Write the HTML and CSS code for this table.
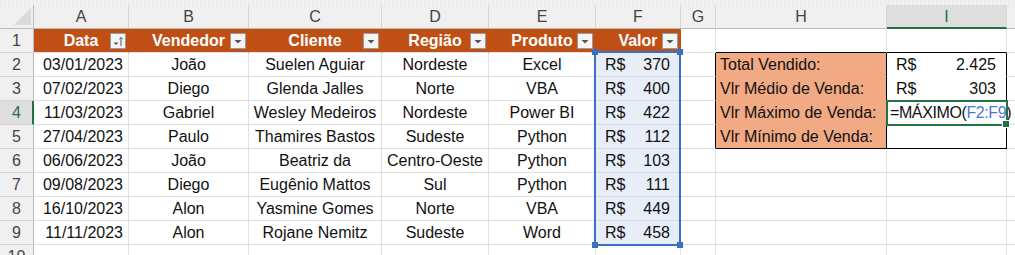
FILE: index.html
```html
<!DOCTYPE html>
<html lang="pt-BR">
<head>
<meta charset="utf-8">
<title>Planilha</title>
<link rel="stylesheet" href="styles.css">
</head>
<body>
<div class="strip"></div>
<div class="wrap">
<div class="sheet">
  <!-- column headers -->
  <div class="ch corner"><span class="tri"></span></div>
  <div class="ch">A</div>
  <div class="ch">B</div>
  <div class="ch">C</div>
  <div class="ch">D</div>
  <div class="ch">E</div>
  <div class="ch">F</div>
  <div class="ch">G</div>
  <div class="ch">H</div>
  <div class="ch ch-active">I</div>
  <div class="ch"></div>

  <!-- row 1 -->
  <div class="rh">1</div>
  <div class="th">Data<span class="fbtn"><svg width="14" height="14" viewBox="0 0 14 14"><path d="M2.5 8.5h5l-2.5 2.5z" fill="#555"/><path d="M10 12V3.5M8.3 5.2L10 3.5l1.7 1.7" stroke="#555" stroke-width="1" fill="none"/></svg></span></div>
  <div class="th">Vendedor<span class="fbtn"><svg width="14" height="14" viewBox="0 0 14 14"><path d="M3.5 6h7L7 9.5z" fill="#555"/></svg></span></div>
  <div class="th">Cliente<span class="fbtn"><svg width="14" height="14" viewBox="0 0 14 14"><path d="M3.5 6h7L7 9.5z" fill="#555"/></svg></span></div>
  <div class="th">Região<span class="fbtn"><svg width="14" height="14" viewBox="0 0 14 14"><path d="M3.5 6h7L7 9.5z" fill="#555"/></svg></span></div>
  <div class="th">Produto<span class="fbtn"><svg width="14" height="14" viewBox="0 0 14 14"><path d="M3.5 6h7L7 9.5z" fill="#555"/></svg></span></div>
  <div class="th">Valor<span class="fbtn"><svg width="14" height="14" viewBox="0 0 14 14"><path d="M3.5 6h7L7 9.5z" fill="#555"/></svg></span></div>
  <div class="c"></div>
  <div class="c box-top"></div>
  <div class="c box-top"></div>
  <div class="c"></div>

  <!-- row 2 -->
  <div class="rh">2</div>
  <div class="c r">03/01/2023</div>
  <div class="c ctr">João</div>
  <div class="c ctr">Suelen Aguiar</div>
  <div class="c ctr">Nordeste</div>
  <div class="c ctr">Excel</div>
  <div class="c acct sel"><span>R$</span><span>370</span></div>
  <div class="c box-left"></div>
  <div class="c lbl">Total Vendido:</div>
  <div class="c acct val"><span>R$</span><span>2.425</span></div>
  <div class="c"></div>

  <!-- row 3 -->
  <div class="rh">3</div>
  <div class="c r">07/02/2023</div>
  <div class="c ctr">Diego</div>
  <div class="c ctr">Glenda Jalles</div>
  <div class="c ctr">Norte</div>
  <div class="c ctr">VBA</div>
  <div class="c acct sel"><span>R$</span><span>400</span></div>
  <div class="c box-left"></div>
  <div class="c lbl">Vlr Médio de Venda:</div>
  <div class="c acct val"><span>R$</span><span>303</span></div>
  <div class="c"></div>

  <!-- row 4 -->
  <div class="rh rh-active">4</div>
  <div class="c r">11/03/2023</div>
  <div class="c ctr">Gabriel</div>
  <div class="c ctr">Wesley Medeiros</div>
  <div class="c ctr">Nordeste</div>
  <div class="c ctr">Power BI</div>
  <div class="c acct sel"><span>R$</span><span>422</span></div>
  <div class="c box-left"></div>
  <div class="c lbl">Vlr Máximo de Venda:</div>
  <div class="c val active">=MÁXIMO(<span class="ref">F2:F9</span>)</div>
  <div class="c"></div>

  <!-- row 5 -->
  <div class="rh">5</div>
  <div class="c r">27/04/2023</div>
  <div class="c ctr">Paulo</div>
  <div class="c ctr">Thamires Bastos</div>
  <div class="c ctr">Sudeste</div>
  <div class="c ctr">Python</div>
  <div class="c acct sel"><span>R$</span><span>112</span></div>
  <div class="c box-left"></div>
  <div class="c lbl box-bottom">Vlr Mínimo de Venda:</div>
  <div class="c val box-bottom"></div>
  <div class="c"></div>

  <!-- row 6 -->
  <div class="rh">6</div>
  <div class="c r">06/06/2023</div>
  <div class="c ctr">João</div>
  <div class="c ctr">Beatriz da</div>
  <div class="c ctr">Centro-Oeste</div>
  <div class="c ctr">Python</div>
  <div class="c acct sel"><span>R$</span><span>103</span></div>
  <div class="c"></div>
  <div class="c"></div>
  <div class="c"></div>
  <div class="c"></div>

  <!-- row 7 -->
  <div class="rh">7</div>
  <div class="c r">09/08/2023</div>
  <div class="c ctr">Diego</div>
  <div class="c ctr">Eugênio Mattos</div>
  <div class="c ctr">Sul</div>
  <div class="c ctr">Python</div>
  <div class="c acct sel"><span>R$</span><span>111</span></div>
  <div class="c"></div>
  <div class="c"></div>
  <div class="c"></div>
  <div class="c"></div>

  <!-- row 8 -->
  <div class="rh">8</div>
  <div class="c r">16/10/2023</div>
  <div class="c ctr">Alon</div>
  <div class="c ctr">Yasmine Gomes</div>
  <div class="c ctr">Norte</div>
  <div class="c ctr">VBA</div>
  <div class="c acct sel"><span>R$</span><span>449</span></div>
  <div class="c"></div>
  <div class="c"></div>
  <div class="c"></div>
  <div class="c"></div>

  <!-- row 9 -->
  <div class="rh">9</div>
  <div class="c r">11/11/2023</div>
  <div class="c ctr">Alon</div>
  <div class="c ctr">Rojane Nemitz</div>
  <div class="c ctr">Sudeste</div>
  <div class="c ctr">Word</div>
  <div class="c acct sel"><span>R$</span><span>458</span></div>
  <div class="c"></div>
  <div class="c"></div>
  <div class="c"></div>
  <div class="c"></div>

  <!-- row 10 -->
  <div class="rh">10</div>
  <div class="c"></div>
  <div class="c"></div>
  <div class="c"></div>
  <div class="c"></div>
  <div class="c"></div>
  <div class="c"></div>
  <div class="c"></div>
  <div class="c"></div>
  <div class="c"></div>
  <div class="c"></div>
</div>

<!-- overlay layer: formula reference range F2:F9 -->
<div class="overlay">
  <div class="range">
    <span class="hdl tl"></span><span class="hdl tr"></span>
    <span class="hdl bl"></span><span class="hdl br"></span>
  </div>
</div>
</div>
</body>
</html>
```

FILE: styles.css
```css
* { box-sizing: border-box; }

html, body {
  margin: 0;
  padding: 0;
  background: #ffffff;
  overflow: hidden;
}

body {
  font-family: "Liberation Sans", Arial, sans-serif;
  font-size: 16px;
  color: #111;
}

.strip {
  height: 5px;
  background: repeating-linear-gradient(90deg, #ececec 0 2px, #f2f2f2 2px 4px);
}

.wrap {
  display: grid;
  width: 1015px;
}

.sheet,
.overlay {
  grid-area: 1 / 1;
  display: grid;
  grid-template-columns: 34px 95px 120px 133px 107px 107px 85px 35px 171px 120px 1fr;
  grid-auto-rows: 24px;
}

.sheet { background: #fff; }

.overlay {
  pointer-events: none;
  z-index: 2;
}

/* column headers */
.ch {
  display: flex;
  align-items: center;
  justify-content: center;
  background: #f0f0f0;
  color: #444;
  border-right: 1px solid #d6d6d6;
  border-bottom: 1px solid #bcbcbc;
  padding-top: 1px;
}

.corner {
  position: relative;
  border-right-color: #bcbcbc;
}

.corner .tri {
  position: absolute;
  right: 2px;
  bottom: 3px;
  width: 0;
  height: 0;
  border-left: 17px solid transparent;
  border-bottom: 17px solid #dadada;
}

.ch-active {
  background: #dedede;
  color: #1e7145;
  border-bottom: 2px solid #217346;
  padding-top: 2px;
}

/* row headers */
.rh {
  display: flex;
  align-items: center;
  justify-content: center;
  background: #f0f0f0;
  color: #444;
  border-right: 1px solid #bcbcbc;
  border-bottom: 1px solid #d6d6d6;
}

.rh-active {
  background: #dedede;
  color: #1e7145;
  border-right: 2px solid #217346;
  padding-left: 1px;
}

/* data cells */
.c {
  display: flex;
  align-items: center;
  border-right: 1px solid #e1e1e1;
  border-bottom: 1px solid #e1e1e1;
  white-space: nowrap;
  padding: 0 5px;
}

.r { justify-content: flex-end; }
.ctr { justify-content: center; padding: 0; }

/* table header row */
.th {
  position: relative;
  display: flex;
  align-items: center;
  justify-content: center;
  background: #c04f15;
  color: #fff;
  font-weight: bold;
  border-right: 1px solid #c04f15;
  border-bottom: 1px solid #e1e1e1;
  white-space: nowrap;
}

.fbtn {
  position: absolute;
  right: 2px;
  top: 4px;
  width: 16px;
  height: 16px;
  background: #f4f4f4;
  border: 1px solid #9a9a9a;
  display: flex;
  align-items: center;
  justify-content: center;
}

/* accounting format */
.acct {
  justify-content: space-between;
  padding: 0 10px 0 9px;
}

.sel {
  background: #e8eef8;
  border-right-color: #d3d9e3;
  border-bottom-color: #d3d9e3;
}

/* summary box */
.box-top { border-bottom: 1px solid #000; }
.box-left { border-right: 1px solid #000; }

.lbl {
  background: #f1aa84;
  border-right: 1px solid #000;
  border-bottom-color: #f1aa84;
  padding-left: 4px;
}

.val {
  border-right: 1px solid #000;
  border-bottom-color: #fff;
}

.val.acct { padding: 0 10px 0 9px; }

.lbl.box-bottom,
.val.box-bottom { border-bottom: 1px solid #000; }

.active {
  position: relative;
  z-index: 3;
  outline: 2px solid #217346;
  outline-offset: -1px;
  padding-left: 3px;
  letter-spacing: -0.4px;
  overflow: visible;
}

.active::after {
  content: "";
  position: absolute;
  right: -4px;
  bottom: -4px;
  width: 6px;
  height: 6px;
  background: #217346;
  border: 1px solid #fff;
}

.ref { color: #4a7bd0; }

/* formula reference range */
.range {
  grid-column: 7;
  grid-row: 3 / 11;
  position: relative;
  margin: -2px 0 -1px -2px;
  border: 2px solid #3c6fc4;
}

.hdl {
  position: absolute;
  width: 6px;
  height: 6px;
  background: #3c6fc4;
}

.hdl.tl { left: -4px; top: -4px; }
.hdl.tr { right: -4px; top: -4px; }
.hdl.bl { left: -4px; bottom: -4px; }
.hdl.br { right: -4px; bottom: -4px; }
```
